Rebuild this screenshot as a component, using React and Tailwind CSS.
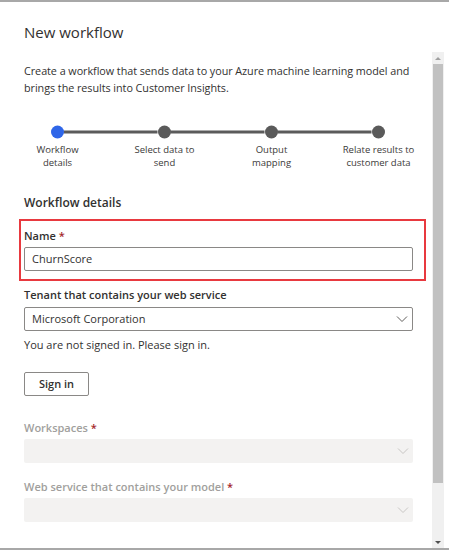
import React from 'react';

const font = { fontFamily: '"Open Sans", "Noto Sans", Arial, sans-serif' };

function Chevron({ color = '#605e5c' }) {
  return (
    <svg width="12" height="8" viewBox="0 0 12 8" fill="none">
      <path d="M1 1.5 L6 6.5 L11 1.5" stroke={color} strokeWidth="1" />
    </svg>
  );
}

function Stepper() {
  const centers = [53.5, 160.5, 267.5, 374.5];
  const steps = [
    ['Workflow', 'details'],
    ['Select data to', 'send'],
    ['Output', 'mapping'],
    ['Relate results to', 'customer data'],
  ];
  return (
    <div className="ml-[-20px] w-[428px]">
      <svg width="428" height="14" viewBox="0 0 428 14" className="block">
        {centers.slice(0, 3).map((c, i) => (
          <line key={i} x1={c + 6} y1="7" x2={centers[i + 1] - 7} y2="7" stroke="#5b5b5b" strokeWidth="3" />
        ))}
        {centers.map((c, i) => (
          <circle key={i} cx={c} cy="7" r="6.5" fill={i === 0 ? '#2f66e8' : '#5a5a5a'} />
        ))}
      </svg>
      <div className="grid grid-cols-4 mt-[4px]">
        {steps.map((s, i) => (
          <div key={i} className="text-center text-[9.5px] leading-[13px] text-[#3b3a39]">
            <div>{s[0]}</div>
            <div>{s[1]}</div>
          </div>
        ))}
      </div>
    </div>
  );
}

function Scrollbar() {
  return (
    <div className="w-[12px] h-full bg-[#f0f0f0] flex flex-col items-center">
      <div className="h-[12px] flex items-center justify-center">
        <div className="w-0 h-0 border-l-[3px] border-r-[3px] border-b-[3px] border-l-transparent border-r-transparent border-b-[#a0a0a0]" />
      </div>
      <div className="w-[10px] h-[419px] bg-[#c1c1c1]" />
      <div className="flex-1" />
      <div className="h-[12px] flex items-center justify-center">
        <div className="w-0 h-0 border-l-[3px] border-r-[3px] border-t-[3px] border-l-transparent border-r-transparent border-t-[#505050]" />
      </div>
    </div>
  );
}

export default function App() {
  return (
    <div className="w-[449px] h-[550px] bg-white border-t-2 border-b-2 border-[#a8a8a8] overflow-hidden flex flex-col text-[#323130]" style={font}>
      <div className="pl-[24px] pt-[20px] h-[50px] text-[15px] leading-[20px] text-[#323130]">New workflow</div>
      <div className="flex flex-1">
        <div className="w-[432px] pl-[24px] pr-[19px]">
          <p className="text-[10.8px] tracking-[-0.05px] leading-[17px] mt-[10px] text-[#323130]">
            Create a workflow that sends data to your Azure machine learning model and brings the results into Customer Insights.
          </p>
          <div className="mt-[29px]">
            <Stepper />
          </div>
          <div className="mt-[24px] text-[12px] leading-[20px] font-semibold text-[#323130]">Workflow details</div>
          <div className="mt-[6px] ml-[-5px] mr-[-13px] border-2 border-[#e8393f] pl-[3px] pr-[11px] pt-[6px] pb-[8px]">
            <div className="text-[11px] leading-[18px] font-semibold">
              Name <span className="text-[#a4262c]">*</span>
            </div>
            <div className="mt-[2px] h-[24px] border border-[#8a8886] rounded-[2px] flex items-center px-[7px] text-[11px]">ChurnScore</div>
          </div>
          <div className="mt-[5px] text-[11px] leading-[18px] font-semibold">Tenant that contains your web service</div>
          <div className="mt-[3px] h-[24px] border border-[#8a8886] rounded-[2px] flex items-center justify-between pl-[7px] pr-[4px] text-[11px]">
            <span>Microsoft Corporation</span>
            <Chevron />
          </div>
          <div className="mt-[5px] text-[11px] leading-[18px]">You are not signed in. Please sign in.</div>
          <button className="block mt-[18px] w-[65px] h-[24px] border border-[#8a8886] rounded-[2px] text-[11px] font-semibold text-[#323130] bg-white">Sign in</button>
          <div className="mt-[23px] text-[11px] leading-[18px] font-semibold text-[#a19f9d]">
            Workspaces <span className="text-[#a4262c]">*</span>
          </div>
          <div className="mt-[2px] h-[24px] bg-[#f3f2f1] rounded-[2px] flex items-center justify-end pr-[4px]">
            <Chevron color="#c8c6c4" />
          </div>
          <div className="mt-[15px] text-[11px] leading-[18px] font-semibold text-[#a19f9d]">
            Web service that contains your model <span className="text-[#a4262c]">*</span>
          </div>
          <div className="mt-[2px] h-[24px] bg-[#f3f2f1] rounded-[2px] flex items-center justify-end pr-[4px]">
            <Chevron color="#c8c6c4" />
          </div>
        </div>
        <div className="flex flex-col">
          <Scrollbar />
        </div>
      </div>
    </div>
  );
}
